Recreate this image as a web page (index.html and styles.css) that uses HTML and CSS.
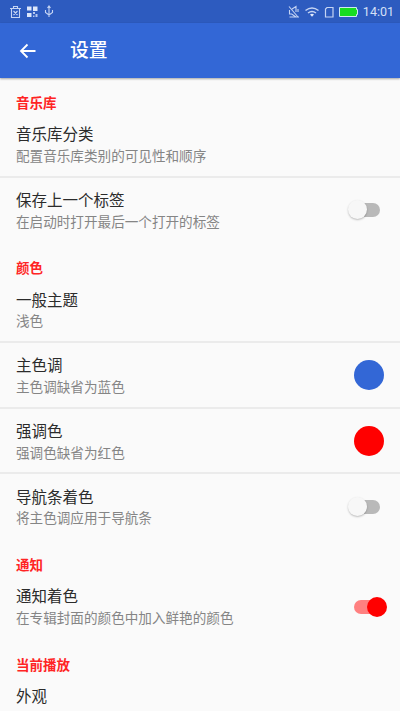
FILE: index.html
```html
<!DOCTYPE html>
<html lang="zh-CN">
<head>
<meta charset="utf-8">
<title>设置</title>
<link rel="stylesheet" href="styles.css">
</head>
<body>
<div class="status">
  <svg class="status-left" width="48" height="14" viewBox="0 0 48 14" fill="none" stroke="#c5d4f3" stroke-width="1.1">
    <path d="M0 3.500h11M3.500 3V1.500h4V3M1.500 4v8.500h8V4M3.500 6l4 4M7.500 6l-4 4"/>
    <path d="M17 1.500h4.500v4H17zM23 1.500h4.500v4.500H23zM17 8h4.500v4H17z" fill="#dce6fa" stroke="none"/>
    <path d="M23 7h2v2h-2zM25.500 9h2v3h-2zM23 10.500h1.500V12H23z" fill="#b5c8f0" stroke="none"/>
    <path d="M39 2v10M35.500 5v2.500L39 10l3.500-2.500V5M37.500 3L39 1l1.500 2"/>
  </svg>
  <div class="status-right">
    <svg width="71" height="14" viewBox="0 0 71 14" fill="none" stroke="#c5d4f3" stroke-width="1.100">
      <path d="M1 1.500l9 10.500M1.500 5v4h2.200l4.300 3M4 4l4-2.500V7M10 4v3M1.500 12H11"/>
      <path d="M17.500 5.500q6.500-5 13 0M20 8q4-3 8 0" stroke-width="1.500"/>
      <path d="M22 9.500q2-1.500 4 0l-2 2.200z" fill="#e3ebfb" stroke="none"/>
      <path d="M39 2.500h6v9.500h-7.500V4z" stroke-width="1.200"/>
      <path d="M51.500 2.500h17v2h1v5h-1v2h-17z" fill="#17dc20" stroke="#cfe9ef" stroke-width="1"/>
    </svg>
    <span class="clock">14:01</span>
  </div>
</div>
<header class="bar">
  <svg class="back" width="18" height="16" viewBox="0 0 18 16" fill="none" stroke="#fff" stroke-width="1.800"><path d="M16.500 8H2.500M8.500 1.500L2 8l6.500 6.500"/></svg>
  <h1>设置</h1>
</header>
<main>
  <h2>音乐库</h2>
  <div class="row"><div><h3>音乐库分类</h3><p>配置音乐库类别的可见性和顺序</p></div></div>
  <div class="row ruled"><div><h3>保存上一个标签</h3><p>在启动时打开最后一个打开的标签</p></div><span class="switch"></span></div>
  <h2>颜色</h2>
  <div class="row"><div><h3>一般主题</h3><p>浅色</p></div></div>
  <div class="row ruled"><div><h3>主色调</h3><p>主色调缺省为蓝色</p></div><span class="dot blue"></span></div>
  <div class="row ruled"><div><h3>强调色</h3><p>强调色缺省为红色</p></div><span class="dot red"></span></div>
  <div class="row ruled"><div><h3>导航条着色</h3><p>将主色调应用于导航条</p></div><span class="switch"></span></div>
  <h2>通知</h2>
  <div class="row"><div><h3>通知着色</h3><p>在专辑封面的颜色中加入鲜艳的颜色</p></div><span class="switch on"></span></div>
  <h2>当前播放</h2>
  <div class="row"><div><h3>外观</h3></div></div>
</main>
</body>
</html>
```
FILE: styles.css
```css
* { box-sizing: border-box; margin: 0; padding: 0; }
body {
  height: 711px;
  display: flex;
  flex-direction: column;
  overflow: hidden;
  background: #fafafa;
  font-family: Roboto, "Noto Sans CJK SC", sans-serif;
  white-space: nowrap;
}
.status {
  flex: none;
  height: 23px;
  padding: 0 6px 0 10px;
  display: flex;
  align-items: center;
  justify-content: space-between;
  background: #2d5bbf;
}
.status svg { display: block; }
.status-right { display: flex; align-items: center; gap: 4px; }
.clock { font-size: 12.5px; line-height: 22px; color: #d5e0f7; }
.bar {
  flex: none;
  height: 55px;
  padding-left: 18.5px;
  display: flex;
  align-items: center;
  background: #3367d6;
  box-shadow: 0 1px 2px rgba(0, 0, 0, .35);
}
.back { margin-right: 33.5px; }
h1 { font-size: 18.8px; line-height: 28px; font-weight: 500; color: #fff; }
main { flex: 1; min-height: 0; overflow: hidden; margin-top: 1px; }
h2 {
  height: 34px;
  padding: 17px 16px 0;
  font-size: 13.5px;
  line-height: 20px;
  font-weight: 700;
  color: #ff2424;
}
h2:first-child { height: 31px; padding-top: 14px; }
.row {
  height: 65.7px;
  padding: 13.3px 16px 0;
  display: flex;
  justify-content: space-between;
}
.ruled { box-shadow: inset 0 2px #ebebeb; }
h3 { font-size: 15.5px; line-height: 24px; font-weight: 400; color: #2b2b2b; }
p { margin-top: -1.3px; font-size: 13.6px; line-height: 20px; font-weight: 400; color: #858585; }
.dot { width: 30px; height: 30px; margin-top: 6px; border-radius: 50%; }
.blue { background: #3367d6; }
.red { background: #f00; }
.switch {
  position: relative;
  width: 26px;
  height: 14px;
  margin: 14.3px 4px 0 0;
  border-radius: 7px;
  background: #b9b9b9;
}
.switch::after {
  content: "";
  position: absolute;
  left: -6px;
  top: -3px;
  width: 19px;
  height: 19px;
  border-radius: 50%;
  background: #f7f7f7;
  box-shadow: 0 1px 2px rgba(0, 0, 0, .25);
}
.on { background: #ff8080; }
.on::after { left: 13px; width: 20px; height: 20px; background: #f00; box-shadow: none; }
```
